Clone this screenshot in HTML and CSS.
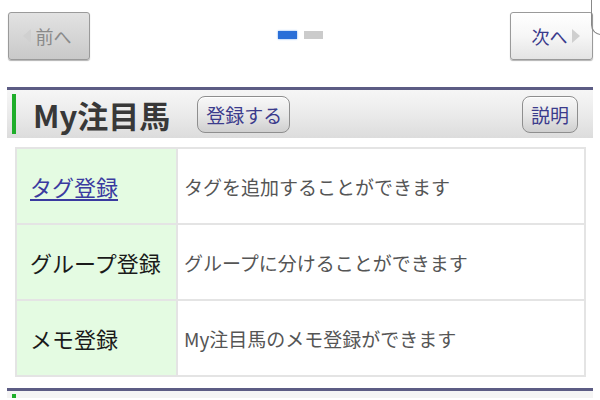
FILE: index.html
```html
<!DOCTYPE html>
<html lang="ja">
<head>
<meta charset="utf-8">
<link rel="stylesheet" href="styles.css">
</head>
<body>
<div class="corner"></div>
<div class="pager">
  <a class="pbtn prev"><span class="tri tri-l"></span>前へ</a>
  <div class="dots"><span class="dot on"></span><span class="dot"></span></div>
  <a class="pbtn next">次へ<span class="tri tri-r"></span></a>
</div>
<div class="section">
  <div class="head">
    <span class="bar"></span>
    <h2 class="title">My注目馬</h2>
    <a class="sbtn reg">登録する</a>
    <a class="sbtn help">説明</a>
  </div>
  <table class="menu">
    <tr><th><a class="link">タグ登録</a></th><td>タグを追加することができます</td></tr>
    <tr><th>グループ登録</th><td>グループに分けることができます</td></tr>
    <tr><th>メモ登録</th><td>My注目馬のメモ登録ができます</td></tr>
  </table>
</div>
<div class="section next-sec">
  <div class="head"><span class="bar"></span></div>
</div>
</body>
</html>
```
FILE: styles.css
```css
html, body { margin: 0; padding: 0; background: #fff; }
body {
  font-family: "Noto Sans CJK JP", "Noto Sans", sans-serif;
  width: 600px; height: 400px; overflow: hidden; position: relative;
}
.corner {
  position: absolute; left: 591px; top: -10px; width: 20px; height: 44px;
  border-left: 1px solid #888; border-bottom: 1px solid #888;
  border-bottom-left-radius: 10px;
}
.pager {
  display: flex; justify-content: space-between; align-items: center;
  padding: 12px 8px 0 8px; height: 48px;
}
.pbtn {
  box-sizing: border-box; width: 82px; height: 48px;
  display: flex; align-items: center; justify-content: center;
  font-size: 18px; border: 1px solid #9a9a9a; border-radius: 3px;
  box-shadow: 0 1px 1px rgba(0,0,0,0.3);
}
.prev {
  background: linear-gradient(#e2e2e2, #d6d6d6 50%, #c9c9c9);
  color: #8a8a8a; padding-right: 4px;
}
.next {
  background: linear-gradient(#ffffff, #f6f6f6 50%, #e4e4e4);
  color: #3b3b8c; padding-left: 8px; width: 83px; margin-right: -1px;
}
.tri { width: 0; height: 0; border-top: 7px solid transparent; border-bottom: 7px solid transparent; }
.tri-l { border-right: 8px solid #d0d0d0; margin-right: 5px; }
.tri-r { border-left: 8px solid #cfcfcf; margin-left: 4px; }
.dots { display: flex; gap: 7px; margin-top: -2px; }
.dot { width: 19px; height: 8px; background: #cbcbcb; }
.dot.on { background: #2a6fd8; box-shadow: 0 0 2px #5a9af0; }
.section { margin: 27px 7px 0; border-top: 3px solid #5c5c84; }
.head {
  height: 48px; display: flex; align-items: center;
  background: linear-gradient(#f6f6f6, #ebebeb 50%, #dcdcdc);
}
.bar { width: 4px; height: 40px; background: #1fae2a; margin-left: 5px; }
.title {
  margin: 0 0 0 17px; font-size: 31px; font-weight: bold; color: #383838;
  line-height: 1;
}
.sbtn {
  box-sizing: border-box; height: 37px; display: flex; align-items: center;
  font-size: 19px; color: #3b3b8c; border: 1px solid #8e8e8e; border-radius: 8px;
  background: linear-gradient(#f8f8f8, #e6e6e6 55%, #cfcfcf);
  box-shadow: inset 0 1px 0 #fff;
}
.reg { margin-left: 27px; width: 93px; padding-left: 8px; }
.help { margin-left: auto; margin-right: 15px; width: 56px; padding-left: 8px; }
.menu {
  margin: 9px 8px 0; width: 571px; border-collapse: collapse;
  border: 2px solid #e2e2e2;
}
.menu th, .menu td { border: 2px solid #e4e4e4; height: 74px; padding: 0; text-align: left; }
.menu th {
  width: 146px; background: #e4fbe2; font-weight: normal; font-size: 22px; color: #1a1a1a;
  padding-left: 13px;
}
.menu td { font-size: 19px; color: #555; padding-left: 6px; }
.link { color: #3a3aa0; text-decoration: underline; text-underline-offset: 3px; }
.next-sec { margin-top: 11px; }
.next-sec .head { background: #f4f4f4; align-items: flex-start; height: 7px; overflow: hidden; }
.next-sec .bar { margin-top: 3px; }
```
